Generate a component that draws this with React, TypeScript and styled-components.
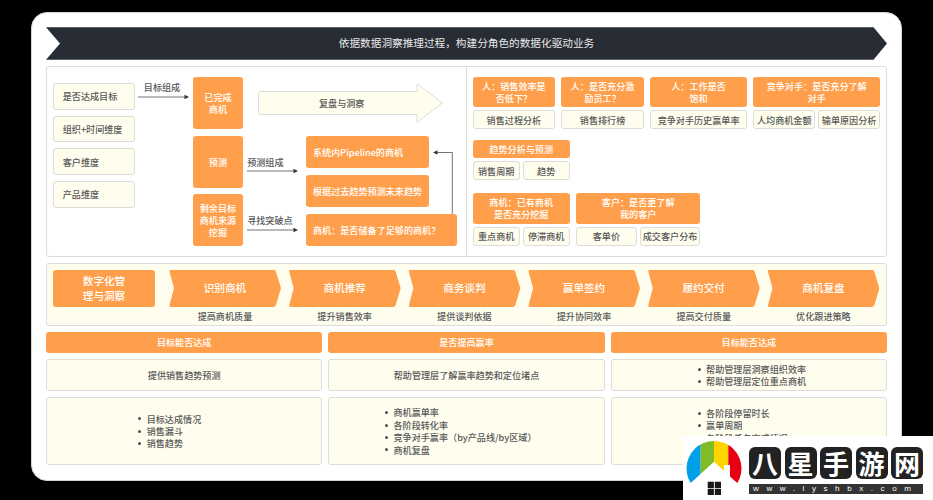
import React from 'react';
import styled, { createGlobalStyle } from 'styled-components';

const ORANGE = '#ff9f4c';
const CREAM = '#fffeee';
const LINE = '#dcdcd8';
const TEXT = '#585858';

const GlobalStyle = createGlobalStyle`
	html, body {
		margin: 0;
		background: #000;
		overflow: hidden;
	}
	body {
		font-family: "Noto Sans CJK SC", "Noto Sans", sans-serif;
		font-size: 9.1px;
		font-weight: 500;
		line-height: 12.4px;
		color: ${TEXT};
	}
`;

const Page = styled.div`
	position: relative;
	width: 933px;
	height: 500px;
	box-sizing: border-box;
	padding: 12.3px 31px 0;
	overflow: hidden;
`;
const Card = styled.div`
	height: 468.4px;
	box-sizing: border-box;
	padding: 14px;
	background: #fff;
	border: 1px solid #d4d4d4;
	border-radius: 16px;
	display: flex;
	flex-direction: column;
	gap: 6px;
`;
const Banner = styled.div`
	height: 32.5px;
	flex: none;
	background: #282c35;
	color: #e8e8e8;
	font-size: 10.65px;
	font-weight: 400;
	display: flex;
	align-items: center;
	justify-content: center;
	clip-path: polygon(0 0, calc(100% - 13.5px) 0, 100% 50%, calc(100% - 13.5px) 100%, 0 100%, 14px 50%);
`;
const Panel = styled.div`
	height: 191.5px;
	flex: none;
	box-sizing: border-box;
	border: 1px solid ${LINE};
	border-radius: 3px;
	display: flex;
`;
const LeftPane = styled.div`
	width: 420px;
	flex: none;
	box-sizing: border-box;
	padding: 10px 0 0 5.7px;
	border-right: 1px solid ${LINE};
	display: flex;
`;
const DimColumn = styled.div`
	width: 82.6px;
	flex: none;
	margin-top: 6.5px;
	display: flex;
	flex-direction: column;
	gap: 6px;
`;
const CreamBox = styled.div`
	box-sizing: border-box;
	background: ${CREAM};
	border: 1px solid ${LINE};
	border-radius: 3px;
`;
const DimBox = styled(CreamBox)`
	height: 26.6px;
	padding-left: 9px;
	display: flex;
	align-items: center;
`;
const LinkWrap = styled.div<{ $top: number; $left: number; $width: number }>`
	flex: none;
	box-sizing: border-box;
	width: ${({ $width }) => $width}px;
	margin-top: ${({ $top }) => $top}px;
	padding-left: ${({ $left }) => $left}px;
`;
const LinkLabel = styled.div<{ $indent: number }>`
	padding-left: ${({ $indent }) => $indent}px;
	line-height: 12px;
	height: 12px;
	white-space: nowrap;
`;
const LinkArrow = styled.svg`
	display: block;
	margin-top: 0.5px;
`;
const Flow = styled.div`
	flex: none;
	display: flex;
	flex-direction: column;
	gap: 7px;
`;
const TopRow = styled.div`
	display: flex;
	gap: 15px;
`;
const LowerRow = styled.div`
	display: flex;
`;
const OrangeBox = styled.div`
	background: ${ORANGE};
	color: #fff;
	border-radius: 3px;
	text-align: center;
	display: flex;
	align-items: center;
	justify-content: center;
`;
const StageBox = styled(OrangeBox)`
	width: 50px;
	height: 52.3px;
	flex: none;
`;
const StageStack = styled.div`
	display: flex;
	flex-direction: column;
	gap: 5.7px;
`;
const LinkStack = styled.div`
	width: 63px;
	flex: none;
`;
const BigArrow = styled.div`
	position: relative;
	width: 185px;
	height: 40px;
	margin-top: 6px;
	display: flex;
	align-items: center;
	padding-left: 61px;
	box-sizing: border-box;
`;
const BigArrowShape = styled.svg`
	position: absolute;
	left: 0;
	top: 0;
`;
const BigArrowLabel = styled.span`
	position: relative;
`;
const AimStack = styled.div`
	position: relative;
	display: flex;
	flex-direction: column;
	gap: 6.7px;
`;
const AimBox = styled(OrangeBox)<{ $width: number }>`
	width: ${({ $width }) => $width}px;
	height: 32.3px;
	box-sizing: border-box;
	padding-left: 7px;
	justify-content: flex-start;
	white-space: nowrap;
`;
const Elbow = styled.svg`
	position: absolute;
	left: 126px;
	top: 12px;
`;
const RightPane = styled.div`
	flex: 1;
	padding: 10px 5.7px 0;
	display: flex;
	flex-direction: column;
`;
const GroupRow = styled.div<{ $top: number }>`
	display: flex;
	gap: 6.3px;
	margin-top: ${({ $top }) => $top}px;
`;
const Group = styled.div<{ $width: number }>`
	width: ${({ $width }) => $width}px;
	flex: none;
	display: flex;
	flex-direction: column;
	gap: 3px;
`;
const GroupHead = styled(OrangeBox)<{ $height: number }>`
	height: ${({ $height }) => $height}px;
`;
const SubRow = styled.div`
	display: flex;
	gap: 3px;
`;
const SubBox = styled(CreamBox)`
	flex: 1 1 0;
	min-width: 0;
	height: 19px;
	display: flex;
	align-items: center;
	justify-content: center;
	white-space: nowrap;
`;
const Process = styled(CreamBox)`
	height: 62.5px;
	flex: none;
	padding: 5.4px 5.7px 0;
	display: flex;
`;
const ProcessTitle = styled(OrangeBox)`
	width: 102.6px;
	height: 37.3px;
	flex: none;
	margin-right: 13.7px;
	font-size: 10.6px;
	line-height: 15.3px;
`;
const Steps = styled.div`
	display: flex;
	gap: 7.7px;
`;
const Step = styled.div`
	width: 112px;
	text-align: center;
`;
const StepShape = styled.div`
	height: 37.3px;
	margin-bottom: 3px;
	background: ${ORANGE};
	color: #fff;
	font-size: 10.6px;
	display: flex;
	align-items: center;
	justify-content: center;
	clip-path: path('M2 0 L104.5 0 Q106.4 0 107 2 L112 18.6 L107 35.3 Q106.4 37.3 104.5 37.3 L2 37.3 Q0 37.3 .6 35.3 L5 18.6 L.6 2 Q0 0 2 0 Z');
`;
const Columns = styled.div`
	flex: none;
	display: grid;
	grid-template-columns: repeat(3, 1fr);
	gap: 6px;
`;
const ColumnHead = styled(OrangeBox)`
	height: 21.7px;
`;
const NoteBox = styled(CreamBox)`
	height: 31.6px;
	display: flex;
	align-items: center;
	justify-content: center;
`;
const ListBox = styled(CreamBox)<{ $top?: number }>`
	height: 68.4px;
	display: flex;
	justify-content: center;
	align-items: ${({ $top }) => ($top ? 'flex-start' : 'center')};
	padding-top: ${({ $top }) => $top || 0}px;
`;
const Bullets = styled.ul<{ $width: number }>`
	width: ${({ $width }) => $width}px;
	box-sizing: border-box;
	margin: 0;
	padding: 0 0 0 6.5px;
	list-style: none;
`;
const Bullet = styled.li`
	display: flex;
	align-items: center;
	white-space: nowrap;
	&::before {
		content: '';
		width: 3px;
		height: 3px;
		margin-right: 5.5px;
		border-radius: 50%;
		background: #4c4f57;
		flex: none;
	}
`;
const Watermark = styled.div`
	position: absolute;
	right: 0;
	bottom: 0;
	width: 250px;
	height: 64px;
	background: #fff;
	display: flex;
`;
const LogoMark = styled.svg`
	flex: none;
	margin-right: 4px;
`;
const Brand = styled.div`
	width: 174px;
	padding-top: 10.7px;
`;
const BrandTiles = styled.div`
	display: flex;
	justify-content: space-between;
`;
const BrandTile = styled.div`
	width: 32px;
	height: 32.3px;
	background: #222;
	color: #fff;
	border-radius: 6px;
	font-size: 26px;
	font-weight: 700;
	line-height: 32px;
	text-align: center;
`;
const BrandUrl = styled.div`
	height: 10px;
	margin-top: 5px;
	background: #333;
	color: #fff;
	font-family: "Liberation Sans", sans-serif;
	font-size: 8px;
	line-height: 10px;
	letter-spacing: 7.6px;
	padding-left: 4px;
	white-space: nowrap;
	overflow: hidden;
`;

function Link({ label, top, left, width, indent }: { label: string; top: number; left: number; width: number; indent: number }) {
	return (
		<LinkWrap $top={top} $left={left} $width={width}>
			<LinkLabel $indent={indent}>{label}</LinkLabel>
			<LinkArrow width="51" height="6" viewBox="0 0 51 6">
				<path d="M0 3H47" stroke="#4c4f57" strokeWidth="0.8" />
				<path d="M46.5 0.8L51 3L46.5 5.2Z" fill="#33363d" />
			</LinkArrow>
		</LinkWrap>
	);
}

const topGroups = [
	{ width: 82.4, head: ['人：销售效率是', '否低下？'], subs: ['销售过程分析'] },
	{ width: 82.4, head: ['人：是否充分激', '励员工？'], subs: ['销售排行榜'] },
	{ width: 97, head: ['人：工作是否', '饱和'], subs: ['竞争对手历史赢单率'] },
	{ width: 126.7, head: ['竞争对手：是否充分了解', '对手'], subs: ['人均商机金额', '输单原因分析'] },
];
const bottomGroups = [
	{ width: 97, head: ['商机：已有商机', '是否充分挖掘'], subs: ['重点商机', '停滞商机'] },
	{ width: 124.4, head: ['客户：是否更了解', '我的客户'], subs: ['客单价', '成交客户分布'] },
];
const steps = [
	['识别商机', '提高商机质量'],
	['商机推荐', '提升销售效率'],
	['商务谈判', '提供谈判依据'],
	['赢单签约', '提升协同效率'],
	['履约交付', '提高交付质量'],
	['商机复盘', '优化跟进策略'],
];

function Logo() {
	return (
		<LogoMark width="62" height="64" viewBox="0 0 62 64">
			<defs>
				<clipPath id="dome">
					<circle cx="31" cy="32.5" r="27.5" />
				</clipPath>
			</defs>
			<g clipPath="url(#dome)">
				<rect x="3" y="4" width="14.7" height="56" fill="#00a0e9" />
				<rect x="17.7" y="4" width="13.3" height="56" fill="#80bc28" />
				<rect x="31" y="4" width="14.3" height="56" fill="#ffd400" />
				<rect x="45.3" y="4" width="14" height="56" fill="#e60012" />
			</g>
			<path d="M31 25.7L41 34.8V29H47V40.5L62 54V64H0V54Z" fill="#fff" />
			<path d="M24.7 45.7h6.2v6.2h-6.2zM31.8 45.7h6.2v6.2h-6.2zM24.7 52.8h6.2V59h-6.2zM31.8 52.8h6.2V59h-6.2z" fill="#1a1a1a" />
		</LogoMark>
	);
}

function App() {
	return (
		<Page>
			<GlobalStyle />
			<Card>
				<Banner>依据数据洞察推理过程，构建分角色的数据化驱动业务</Banner>
				<Panel>
					<LeftPane>
						<DimColumn>
							<DimBox>是否达成目标</DimBox>
							<DimBox>组织+时间维度</DimBox>
							<DimBox>客户维度</DimBox>
							<DimBox>产品维度</DimBox>
						</DimColumn>
						<Link label="目标组成" top={4.3} left={3} width={57.7} indent={5.5} />
						<Flow>
							<TopRow>
								<StageBox>已完成<br />商机</StageBox>
								<BigArrow>
									<BigArrowShape width="185" height="40" viewBox="0 0 185 40">
										<path d="M2.5 8.5H159V0.7L184.3 20L159 39.3V31.5H2.5Q0.5 31.5 0.5 29.5V10.5Q0.5 8.5 2.5 8.5Z" fill={CREAM} stroke={LINE} />
									</BigArrowShape>
									<BigArrowLabel>复盘与洞察</BigArrowLabel>
								</BigArrow>
							</TopRow>
							<LowerRow>
								<StageStack>
									<StageBox>预测</StageBox>
									<StageBox>剩余目标<br />商机来源<br />挖掘</StageBox>
								</StageStack>
								<LinkStack>
									<Link label="预测组成" top={19.7} left={3.7} width={63} indent={0.5} />
									<Link label="寻找突破点" top={40} left={3.7} width={63} indent={0.5} />
								</LinkStack>
								<AimStack>
									<AimBox $width={123.5}>系统内Pipeline的商机</AimBox>
									<AimBox $width={123.5}>根据过去趋势预测未来趋势</AimBox>
									<AimBox $width={151}>商机：是否储备了足够的商机？</AimBox>
									<Elbow width="22" height="66" viewBox="0 0 22 66">
										<path d="M20.3 66V4.5H5" fill="none" stroke="#4c4f57" strokeWidth="0.8" />
										<path d="M5.5 2.3L1 4.5L5.5 6.7Z" fill="#33363d" />
									</Elbow>
								</AimStack>
							</LowerRow>
						</Flow>
					</LeftPane>
					<RightPane>
						<GroupRow $top={0}>
							{topGroups.map((g) => (
								<Group key={g.head[0]} $width={g.width}>
									<GroupHead $height={30.7}>{g.head[0]}<br />{g.head[1]}</GroupHead>
									<SubRow>
										{g.subs.map((s) => <SubBox key={s}>{s}</SubBox>)}
									</SubRow>
								</Group>
							))}
						</GroupRow>
						<GroupRow $top={10.7}>
							<Group $width={97}>
								<GroupHead $height={18.3}>趋势分析与预测</GroupHead>
								<SubRow>
									<SubBox>销售周期</SubBox>
									<SubBox>趋势</SubBox>
								</SubRow>
							</Group>
						</GroupRow>
						<GroupRow $top={12.4}>
							{bottomGroups.map((g) => (
								<Group key={g.head[0]} $width={g.width}>
									<GroupHead $height={30.7}>{g.head[0]}<br />{g.head[1]}</GroupHead>
									<SubRow>
										{g.subs.map((s) => <SubBox key={s}>{s}</SubBox>)}
									</SubRow>
								</Group>
							))}
						</GroupRow>
					</RightPane>
				</Panel>
				<Process>
					<ProcessTitle>数字化管<br />理与洞察</ProcessTitle>
					<Steps>
						{steps.map(([name, note]) => (
							<Step key={name}>
								<StepShape>{name}</StepShape>
								{note}
							</Step>
						))}
					</Steps>
				</Process>
				<Columns>
					<ColumnHead>目标能否达成</ColumnHead>
					<ColumnHead>是否提高赢率</ColumnHead>
					<ColumnHead>目标能否达成</ColumnHead>
					<NoteBox>提供销售趋势预测</NoteBox>
					<NoteBox>帮助管理层了解赢率趋势和定位堵点</NoteBox>
					<NoteBox>
						<Bullets $width={115.6}>
							<Bullet>帮助管理层洞察组织效率</Bullet>
							<Bullet>帮助管理层定位重点商机</Bullet>
						</Bullets>
					</NoteBox>
					<ListBox>
						<Bullets $width={105}>
							<Bullet>目标达成情况</Bullet>
							<Bullet>销售漏斗</Bullet>
							<Bullet>销售趋势</Bullet>
						</Bullets>
					</ListBox>
					<ListBox>
						<Bullets $width={176}>
							<Bullet>商机赢单率</Bullet>
							<Bullet>各阶段转化率</Bullet>
							<Bullet>竞争对手赢率（by产品线/by区域）</Bullet>
							<Bullet>商机复盘</Bullet>
						</Bullets>
					</ListBox>
					<ListBox $top={9}>
						<Bullets $width={115.6}>
							<Bullet>各阶段停留时长</Bullet>
							<Bullet>赢单周期</Bullet>
							<Bullet>各阶段任务完成情况</Bullet>
						</Bullets>
					</ListBox>
				</Columns>
			</Card>
			<Watermark>
				<Logo />
				<Brand>
					<BrandTiles>
						{['八', '星', '手', '游', '网'].map((c) => <BrandTile key={c}>{c}</BrandTile>)}
					</BrandTiles>
					<BrandUrl>www.lyshbx.com</BrandUrl>
				</Brand>
			</Watermark>
		</Page>
	);
}

export default App;
